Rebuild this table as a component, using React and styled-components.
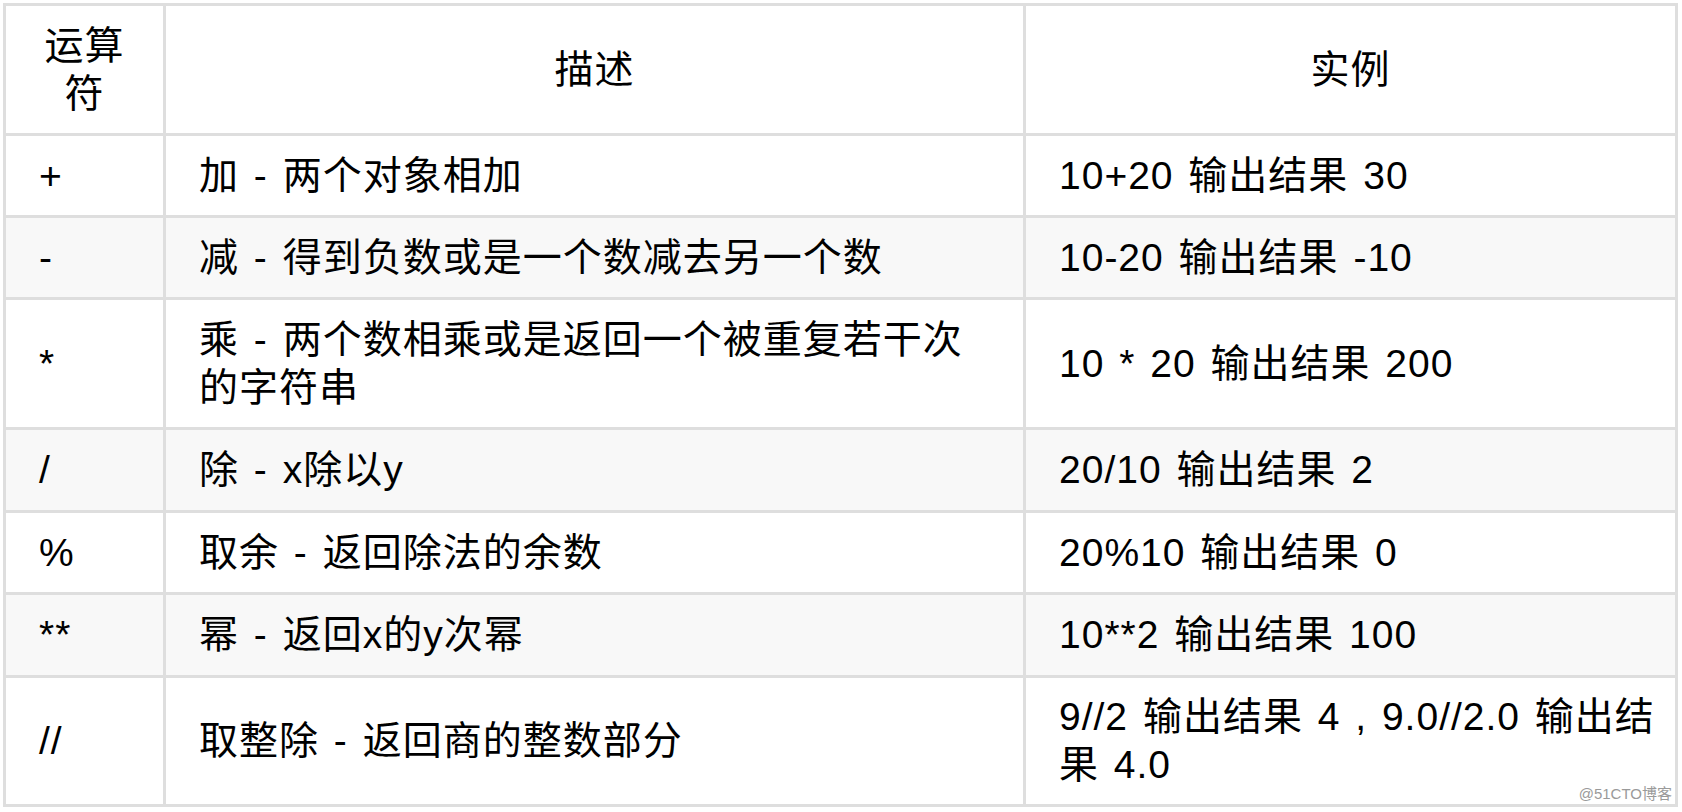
import React from 'react'
import styled, { createGlobalStyle } from 'styled-components'

const GlobalStyle = createGlobalStyle`
  body {
    margin: 0;
    background: #ffffff;
  }
`

const Wrapper = styled.div`
  position: relative;
  width: fit-content;
  padding: 3px;
`

const Table = styled.div`
  display: grid;
  grid-template-columns: 157px 857px 649px;
  grid-template-rows: 127px 79px 79px 127px 80px 79px 80px 126px;
  gap: 3px;
  padding: 3px;
  background: #dedede;
  font-family: "Liberation Sans", "Noto Sans CJK SC", sans-serif;
  font-size: 39px;
  line-height: 48px;
  letter-spacing: 1px;
  color: #000;
`

const HeadCell = styled.div`
  background: #ffffff;
  display: flex;
  align-items: center;
  justify-content: center;
  text-align: center;
  padding: 0 24px;
`

const Cell = styled.div`
  background: ${p => (p.$shade ? '#f8f8f8' : '#ffffff')};
  display: flex;
  align-items: center;
  padding: 0 ${p => p.$right || 10}px 0 33px;
  word-spacing: 3px;
`

const Watermark = styled.div`
  position: absolute;
  right: 9px;
  bottom: 7px;
  font-family: "Liberation Sans", "Noto Sans CJK SC", sans-serif;
  font-size: 15px;
  color: #9a9a9a;
  text-shadow: 0 0 2px #fff, 0 0 1px #fff;
`

const rows = [
  ['+', '加 - 两个对象相加', '10+20 输出结果 30'],
  ['-', '减 - 得到负数或是一个数减去另一个数', '10-20 输出结果 -10'],
  ['*', '乘 - 两个数相乘或是返回一个被重复若干次的字符串', '10 * 20 输出结果 200'],
  ['/', '除 - x除以y', '20/10 输出结果 2'],
  ['%', '取余 - 返回除法的余数', '20%10 输出结果 0'],
  ['**', '幂 - 返回x的y次幂', '10**2 输出结果 100'],
  ['//', '取整除 - 返回商的整数部分', '9//2 输出结果 4 , 9.0//2.0 输出结果 4.0'],
]

export default function App() {
  return (
    <>
      <GlobalStyle />
      <Wrapper>
        <Table>
          <HeadCell>运算符</HeadCell>
          <HeadCell>描述</HeadCell>
          <HeadCell>实例</HeadCell>
          {rows.map(([op, desc, example], i) => (
            <React.Fragment key={op}>
              <Cell $shade={i % 2 === 1}>{op}</Cell>
              <Cell $shade={i % 2 === 1} $right={36}>{desc}</Cell>
              <Cell $shade={i % 2 === 1} $right={10}>{example}</Cell>
            </React.Fragment>
          ))}
        </Table>
        <Watermark>@51CTO博客</Watermark>
      </Wrapper>
    </>
  )
}
